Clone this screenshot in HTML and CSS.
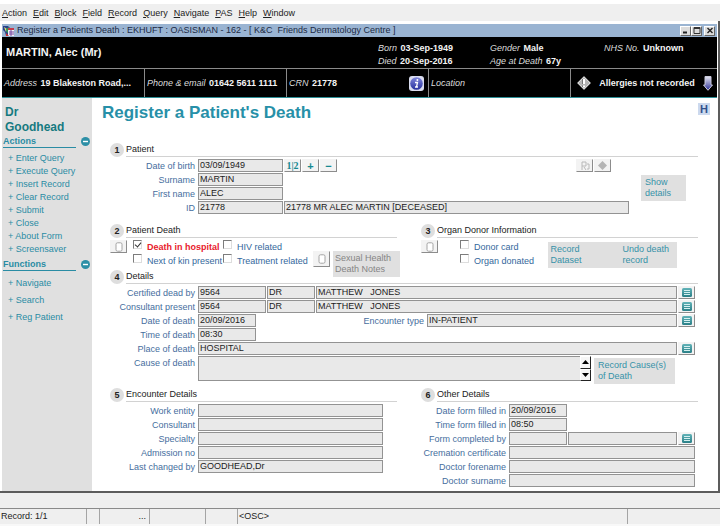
FILE: index.html
```html
<!DOCTYPE html>
<html lang="en">
<head>
<meta charset="utf-8">
<title>Register a Patient's Death</title>
<link rel="stylesheet" href="styles.css">
</head>
<body>
<svg class="defs" width="0" height="0" aria-hidden="true">
  <defs>
    <linearGradient id="tealFill" x1="0" y1="0" x2="0" y2="1"><stop offset="0" stop-color="#62b3b8"/><stop offset="1" stop-color="#2a7f87"/></linearGradient>
    <linearGradient id="blueFill" x1="0" y1="0" x2="0" y2="1"><stop offset="0" stop-color="#7f86dc"/><stop offset="1" stop-color="#26309c"/></linearGradient>
    <linearGradient id="arrowFill" x1="0" y1="0" x2="0" y2="1"><stop offset="0" stop-color="#e6e6f0"/><stop offset="1" stop-color="#2a2f96"/></linearGradient>
    <symbol id="list" viewBox="0 0 10 9"><rect width="10" height="9" rx="1.5" fill="url(#tealFill)"/><path d="M2 2.5h6M2 4.5h6M2 6.5h6" stroke="#d4f0f0" stroke-width="1"/></symbol>
    <symbol id="page" viewBox="0 0 8 10"><rect x="1" y=".8" width="6" height="8.4" rx="1.5" fill="#fff" stroke="#a4a4a4"/></symbol>
    <symbol id="minus" viewBox="0 0 9 9"><circle cx="4.5" cy="4.5" r="4.5" fill="#2d8fa6"/><path d="M2 4.5h5" stroke="#fff" stroke-width="1.4"/></symbol>
  </defs>
</svg>

<nav class="menu">
  <a href="#"><u>A</u>ction</a><a href="#"><u>E</u>dit</a><a href="#"><u>B</u>lock</a><a href="#"><u>F</u>ield</a><a href="#"><u>R</u>ecord</a><a href="#"><u>Q</u>uery</a><a href="#"><u>N</u>avigate</a><a href="#"><u>P</u>AS</a><a href="#"><u>H</u>elp</a><a href="#"><u>W</u>indow</a>
</nav>

<div class="window">
  <header class="titlebar">
    <svg width="12" height="12" viewBox="0 0 12 12" aria-hidden="true"><path d="M0 1h5l2 2v8H3L2 7 0 5z" fill="#28408c"/><path d="M1 2l3 2-1 3z" fill="#e8e070"/><path d="M3 4l3-2 1 4-3 2z" fill="#2f9a52"/><rect x="5" y="3" width="6" height="8" fill="#f2f2f8"/><path d="M5 3h6v2H5z" fill="#c43a4c"/><path d="M6 7h5M6 9h5M8 5v6" stroke="#7446a0"/><path d="M3 8l3 3H3z" fill="#c33"/></svg>
    <span class="caption">Register a Patients Death : EKHUFT : OASISMAN - 162 - [ K&amp;C&nbsp; Friends Dermatology Centre ]</span>
    <span class="controls">
      <button type="button" aria-label="Minimise"><svg width="8" height="7" viewBox="0 0 8 7"><path d="M1 5.5h4" stroke="#222" stroke-width="2"/></svg></button>
      <button type="button" aria-label="Maximise"><svg width="8" height="7" viewBox="0 0 8 7"><path d="M1 .5h6v6H1zM1 1.5h6" fill="none" stroke="#333"/></svg></button>
      <button type="button" class="close" aria-label="Close"><svg width="8" height="7" viewBox="0 0 8 7"><path d="M1.5 1l5 5M6.5 1l-5 5" stroke="#222" stroke-width="1.4"/></svg></button>
    </span>
  </header>

  <section class="banner">
    <div class="who">
      <strong class="name">MARTIN, Alec (Mr)</strong>
      <div><p><i>Born</i> <b>03-Sep-1949</b></p><p><i>Died</i> <b>20-Sep-2016</b></p></div>
      <div><p><i>Gender</i> <b>Male</b></p><p><i>Age at Death</i> <b>67y</b></p></div>
      <div><p><i>NHS No.</i> <b>Unknown</b></p></div>
    </div>
    <div class="contact">
      <p><i>Address</i> <b>19 Blakeston Road,...</b></p>
      <p><i>Phone &amp; email</i> <b>01642 5611 1111</b></p>
      <p class="spread"><span><i>CRN</i> <b>21778</b></span>
        <svg width="15" height="15" viewBox="0 0 15 15" aria-hidden="true"><rect width="15" height="15" rx="3" fill="#d9dcef"/><circle cx="7.5" cy="7.5" r="6.3" fill="url(#blueFill)"/><path d="M7 6.5h1.5l-1 4.5h1.5M6 6.5h2M6 11h3" stroke="#fff" stroke-width="1.3" fill="none"/><circle cx="8.4" cy="3.9" r="1" fill="#fff"/></svg></p>
      <p><i>Location</i></p>
      <p class="spread allergies">
        <svg width="14" height="14" viewBox="0 0 14 14" aria-hidden="true"><path d="M7 0l7 7-7 7-7-7z" fill="#b4b4b4"/><path d="M7 1L13 7 7 13 1 7z" fill="none" stroke="#d8d8d8"/><path d="M7 3v5M7 9.500v1.700" stroke="#fff" stroke-width="2"/><path d="M5.500 3v5M5.500 9.500v1.500" stroke="#777"/></svg>
        <b>Allergies not recorded</b>
        <svg width="10" height="15" viewBox="0 0 10 15" aria-hidden="true"><path d="M2 .5h6V9h1.500L5 14.300.5 9H2z" fill="url(#arrowFill)" stroke="#c9c9dc"/></svg></p>
    </div>
  </section>

  <div class="work">
    <aside class="side">
      <p class="user">Dr Goodhead</p>
      <h2><span>Actions</span><button type="button" aria-label="Collapse actions"><svg width="9" height="9"><use href="#minus"/></svg></button></h2>
      <ul>
        <li><a href="#">+ Enter Query</a></li><li><a href="#">+ Execute Query</a></li><li><a href="#">+ Insert Record</a></li><li><a href="#">+ Clear Record</a></li><li><a href="#">+ Submit</a></li><li><a href="#">+ Close</a></li><li><a href="#">+ About Form</a></li><li><a href="#">+ Screensaver</a></li>
      </ul>
      <h2><span>Functions</span><button type="button" aria-label="Collapse functions"><svg width="9" height="9"><use href="#minus"/></svg></button></h2>
      <ul class="loose">
        <li><a href="#">+ Navigate</a></li><li><a href="#">+ Search</a></li><li><a href="#">+ Reg Patient</a></li>
      </ul>
    </aside>

    <main>
      <div class="heading"><h1>Register a Patient's Death</h1><button type="button" class="help">H</button></div>

      <form>
        <section>
          <h3><em>1</em><span>Patient</span></h3>
          <div class="patient">
            <div class="rows">
              <div class="row"><label for="dob">Date of birth</label><input id="dob" class="w85" value="03/09/1949" readonly>
                <button type="button" class="tool digits">1|2</button><button type="button" class="tool">+</button><button type="button" class="tool">−</button>
                <span class="flags"><button type="button" class="tool" aria-label="Flag"><svg width="10" height="10" viewBox="0 0 10 10"><path d="M2 9V1h4v4H2M4 6l2 3M7 3h2v5H7" fill="none" stroke="#b8b8b8"/></svg></button><button type="button" class="tool" aria-label="Alert"><svg width="9" height="9" viewBox="0 0 9 9"><path d="M4.500 0L9 4.500 4.500 9 0 4.500z" fill="#b4b4b4"/></svg></button></span></div>
              <div class="row"><label for="sur">Surname</label><input id="sur" class="w85" value="MARTIN" readonly></div>
              <div class="row"><label for="first">First name</label><input id="first" class="w85" value="ALEC" readonly></div>
              <div class="row"><label for="pid">ID</label><input id="pid" class="w85" value="21778" readonly><input class="grow" aria-label="Patient summary" value="21778 MR ALEC MARTIN [DECEASED]" readonly></div>
            </div>
            <button type="button" class="action show">Show<br>details</button>
          </div>
        </section>

        <div class="pair">
          <section>
            <h3><em>2</em><span>Patient Death</span></h3>
            <div class="checks">
              <button type="button" class="tool" aria-label="Patient death note"><svg width="8" height="10"><use href="#page"/></svg></button>
              <div class="ticks two">
                <label class="alert"><input type="checkbox" checked>Death in hospital</label><label><input type="checkbox">HIV related</label>
                <label><input type="checkbox">Next of kin present</label><label><input type="checkbox">Treatment related</label>
              </div>
              <div class="notes">
                <button type="button" class="tool" aria-label="Sexual health note"><svg width="8" height="10"><use href="#page"/></svg></button>
                <button type="button" class="action muted">Sexual Health<br>Death Notes</button>
              </div>
            </div>
          </section>
          <section>
            <h3><em>3</em><span>Organ Donor Information</span></h3>
            <div class="checks">
              <button type="button" class="tool" aria-label="Organ donor note"><svg width="8" height="10"><use href="#page"/></svg></button>
              <div class="ticks one">
                <label><input type="checkbox">Donor card</label>
                <label><input type="checkbox">Organ donated</label>
              </div>
              <div class="actions"><button type="button" class="action">Record<br>Dataset</button><button type="button" class="action">Undo death<br>record</button></div>
            </div>
          </section>
        </div>

        <section>
          <h3><em>4</em><span>Details</span></h3>
          <div class="rows details">
            <div class="row"><label for="cert">Certified dead by</label><input id="cert" class="w68" value="9564" readonly><input class="w48" aria-label="Certifier title" value="DR" readonly><input class="grow" aria-label="Certifier name" value="MATTHEW&nbsp;&nbsp; JONES" readonly><button type="button" class="tool" aria-label="List certifiers"><svg width="10" height="9"><use href="#list"/></svg></button></div>
            <div class="row"><label for="cons">Consultant present</label><input id="cons" class="w68" value="9564" readonly><input class="w48" aria-label="Consultant title" value="DR" readonly><input class="grow" aria-label="Consultant name" value="MATTHEW&nbsp;&nbsp; JONES" readonly><button type="button" class="tool" aria-label="List consultants"><svg width="10" height="9"><use href="#list"/></svg></button></div>
            <div class="row"><label for="dod">Date of death</label><input id="dod" class="w58" value="20/09/2016" readonly><label for="enc" class="grow">Encounter type</label><input id="enc" class="w250" value="IN-PATIENT" readonly><button type="button" class="tool" aria-label="List encounter types"><svg width="10" height="9"><use href="#list"/></svg></button></div>
            <div class="row"><label for="tod">Time of death</label><input id="tod" class="w58" value="08:30" readonly></div>
            <div class="row"><label for="place">Place of death</label><input id="place" class="grow" value="HOSPITAL" readonly><button type="button" class="tool" aria-label="List places"><svg width="10" height="9"><use href="#list"/></svg></button></div>
            <div class="row cause"><label for="cause">Cause of death</label><textarea id="cause" readonly></textarea>
              <span class="scroller"><button type="button" aria-label="Scroll up"><svg width="7" height="4" viewBox="0 0 7 4"><path d="M0 4h7L3.500 0z"/></svg></button><button type="button" aria-label="Scroll down"><svg width="7" height="4" viewBox="0 0 7 4"><path d="M0 0h7L3.500 4z"/></svg></button></span>
              <button type="button" class="action">Record Cause(s)<br>of Death</button></div>
          </div>
        </section>

        <div class="pair">
          <section>
            <h3><em>5</em><span>Encounter Details</span></h3>
            <div class="rows encounter">
              <div class="row"><label for="work">Work entity</label><input id="work" class="grow" readonly></div>
              <div class="row"><label for="con2">Consultant</label><input id="con2" class="grow" readonly></div>
              <div class="row"><label for="spec">Specialty</label><input id="spec" class="grow" readonly></div>
              <div class="row"><label for="adm">Admission no</label><input id="adm" class="grow" readonly></div>
              <div class="row"><label for="last">Last changed by</label><input id="last" class="grow" value="GOODHEAD,Dr" readonly></div>
            </div>
          </section>
          <section>
            <h3><em>6</em><span>Other Details</span></h3>
            <div class="rows other">
              <div class="row"><label for="dff">Date form filled in</label><input id="dff" class="w58" value="20/09/2016" readonly></div>
              <div class="row"><label for="tff">Time form filled in</label><input id="tff" class="w58" value="08:50" readonly></div>
              <div class="row"><label for="fcb">Form completed by</label><input id="fcb" class="w58" readonly><input class="grow" aria-label="Completed by name" readonly><button type="button" class="tool" aria-label="List staff"><svg width="10" height="9"><use href="#list"/></svg></button></div>
              <div class="row"><label for="crem">Cremation certificate</label><input id="crem" class="grow" readonly></div>
              <div class="row"><label for="df">Doctor forename</label><input id="df" class="grow" readonly></div>
              <div class="row"><label for="ds">Doctor surname</label><input id="ds" class="grow" readonly></div>
            </div>
          </section>
        </div>
      </form>
    </main>
  </div>
</div>

<footer class="status">
  <span>Record: 1/1</span><span></span><span class="end">...</span><span></span><span></span><span>&lt;OSC&gt;</span><span></span>
</footer>
</body>
</html>
```
FILE: styles.css
```css
* { box-sizing: border-box; }

body {
  margin: 0;
  padding-top: 4px;
  min-height: 100vh;
  display: flex;
  flex-direction: column;
  background: #fff;
  color: #222;
  font: 9px/13px "Liberation Sans", Arial, sans-serif;
}

.defs { position: absolute; }
p, h1, h2, h3, ul { margin: 0; padding: 0; }
svg { display: block; flex: none; }
a { color: inherit; text-decoration: none; }
button, input, textarea { font: inherit; color: inherit; margin: 0; border-radius: 0; }
button { padding: 0; border: 0; background: none; }

/* menu bar */
.menu {
  display: flex;
  gap: 6px;
  height: 17px;
  padding: 0 2px;
  background: #efefef;
  line-height: 18px;
}

/* application window */
.window {
  flex: 1;
  display: flex;
  flex-direction: column;
  padding: 3px 1px 0 2px;
  border-right: 2px solid #5c5c5c;
  border-bottom: 2px solid #5c5c5c;
}

.titlebar {
  display: flex;
  align-items: center;
  gap: 2px;
  height: 13px;
  padding: 0 2px 0 1px;
  background: #9ab4d2;
  color: #1c2a44;
}
.caption { flex: 1; white-space: nowrap; }
.controls { display: flex; }
.controls button {
  display: grid;
  place-items: center;
  width: 11px;
  height: 10px;
  background: #dcdcdc;
  border: 1px solid;
  border-color: #fff #666 #666 #fff;
}
.controls .close { margin-left: 2px; }

.banner {
  background: #000;
  color: #f4f4f4;
  border-bottom: 1px solid #2c8f96;
}
.banner i { margin-right: 1px; color: #dcdcdc; }
.who {
  display: grid;
  grid-template-columns: 372fr 112fr 114fr 113fr;
  height: 32px;
  padding: 5px 0 0 4px;
  border-bottom: 1px solid #8a8a8a;
}
.name { font-size: 11px; line-height: 21px; }
.contact {
  display: grid;
  grid-template-columns: 142fr 142fr 142fr 142fr 147fr;
  height: 28px;
}
.contact p {
  padding: 0 2px;
  line-height: 28px;
  white-space: nowrap;
  border-left: 1px solid #8a8a8a;
}
.contact p:first-child { border-left: 0; }
.contact .spread {
  display: flex;
  align-items: center;
  justify-content: space-between;
  padding-right: 4px;
}
.contact .allergies { padding-left: 6px; }

.work { flex: 1; display: flex; }

/* sidebar */
.side {
  width: 90px;
  padding: 7px 2px 0 1px;
  background: #e0e0e0;
  color: #2a8ca4;
}
.user {
  width: 70px;
  padding-left: 2px;
  color: #167a80;
  font-size: 12px;
  line-height: 15px;
  font-weight: bold;
}
.side h2 {
  display: flex;
  justify-content: space-between;
  margin-bottom: 4px;
  font-size: 9px;
  line-height: 12px;
}
.side h2 span { width: 73px; border-bottom: 1px solid #2a8ca4; }
.side ul { margin-bottom: 2px; padding-left: 5px; list-style: none; }
.loose { line-height: 17px; }

/* form area */
main { flex: 1; padding: 5px 16px 0 18px; }
.heading {
  display: flex;
  justify-content: space-between;
  align-items: flex-start;
  margin: 0 -9px 0 -8px;
}
h1 { color: #2790a8; font-size: 17px; line-height: 19px; }
.help {
  width: 12px;
  height: 12px;
  background: #ccd9ee;
  color: #32518c;
  font-weight: bold;
  font-size: 11px;
  line-height: 12px;
}

form { padding-top: 21px; }
h3 {
  display: flex;
  gap: 2px;
  height: 14px;
  margin: 0 3px 2px 0;
  font-size: 9px;
  font-weight: normal;
}
h3 em {
  width: 14px;
  border-radius: 7px;
  background: #dedede;
  font-style: normal;
  font-weight: bold;
  line-height: 14px;
  text-align: center;
}
h3 span { flex: 1; border-bottom: 1px solid #d2d2d2; }

.rows { display: flex; flex-direction: column; gap: 1px; }
.row { display: flex; gap: 1px; height: 13px; }
.row label {
  width: 85px;
  margin-right: 2px;
  color: #466e9e;
  line-height: 15px;
  text-align: right;
  white-space: nowrap;
}
.row .grow { flex: 1; min-width: 0; }
.row input, textarea {
  height: 13px;
  padding: 0 1px;
  background: #e9e9e9;
  border: 1px solid #939393;
  outline: 0;
}
.w48 { width: 48px; }
.w58 { width: 58px; }
.w68 { width: 68px; }
.w85 { width: 85px; }
.w250 { width: 250px; }

.tool {
  flex: none;
  display: grid;
  place-items: center;
  width: 17px;
  height: 13px;
  background: #f3f3f3;
  border: 1px solid;
  border-color: #f3f3f3 #8c8c8c #8c8c8c #f3f3f3;
  color: #168890;
  font-size: 11px;
  font-weight: bold;
  line-height: 10px;
}
.digits { font: bold 10px/10px "Liberation Serif", serif; }

.action {
  flex: none;
  padding: 2px 4px;
  background: #e0e0e0;
  color: #3692a8;
  line-height: 11px;
  text-align: left;
}
.muted { color: #858585; }

.patient { display: flex; align-items: flex-start; margin-bottom: 10px; }
.patient .rows { flex: 1; }
.flags { display: flex; gap: 1px; margin: 0 18px 0 auto; }
.show { width: 45px; margin: 16px 15px 0 12px; }

.pair {
  display: grid;
  grid-template-columns: minmax(0, 290fr) minmax(0, 280fr);
  gap: 21px;
}
.checks { display: flex; height: 30px; color: #34689c; }
.ticks { display: grid; align-content: start; grid-auto-rows: 14px; margin-left: 6px; white-space: nowrap; }
.two { grid-template-columns: 90px 86px; }
.one { margin-left: 22px; }
.ticks label { display: flex; gap: 5px; line-height: 15px; }
.alert { color: #e8202c; font-weight: bold; }
.ticks input {
  appearance: none;
  width: 9px;
  height: 9px;
  background: #fff;
  border: 1px solid;
  border-color: #7c7c7c #ddd #ddd #7c7c7c;
}
.ticks input:checked::after {
  content: "";
  display: block;
  width: 3px;
  height: 5px;
  margin-left: 2px;
  border: solid #333;
  border-width: 0 1px 1px 0;
  transform: rotate(40deg);
}
.notes { display: flex; gap: 3px; align-items: flex-start; margin: 11px 0 0 auto; }
.notes .tool { height: 16px; }
.notes .action { width: 67px; margin-bottom: -8px; padding: 2px; }
.actions {
  display: flex;
  gap: 37px;
  height: 26px;
  margin: 2px 24px 0 auto;
  padding-right: 6px;
  background: #e0e0e0;
}
.actions .action { padding: 2px; }

.details { margin-right: 6px; margin-bottom: 7px; }
.row.cause { height: 25px; }
.cause textarea { flex: 1; height: 25px; resize: none; }
.scroller { display: grid; margin-left: -12px; width: 11px; }
.scroller button {
  display: grid;
  place-items: center;
  background: #f6f6f6;
  border: 1px solid;
  border-color: #fff #222 #222 #fff;
}
.cause .action { width: 81px; height: 26px; margin: 2px 20px 0 2px; }

.encounter { margin-right: 17px; }
.other { margin-right: 6px; }

/* status bar */
.status {
  display: grid;
  grid-template-columns: 87px 13px 50px 56px 32px 1fr 92px;
  height: 33px;
  padding-top: 15px;
  background: linear-gradient(#8a8a8a, #8a8a8a) 0 15px / 100% 1px no-repeat #efefef;
  border-bottom: 2px solid #f8f8f8;
}
.status span { margin-top: 1px; padding: 1px; border-right: 1px solid #a4a4a4; }
.status span:last-child { border-right: 0; }
.status .end { padding-right: 3px; text-align: right; }
```
